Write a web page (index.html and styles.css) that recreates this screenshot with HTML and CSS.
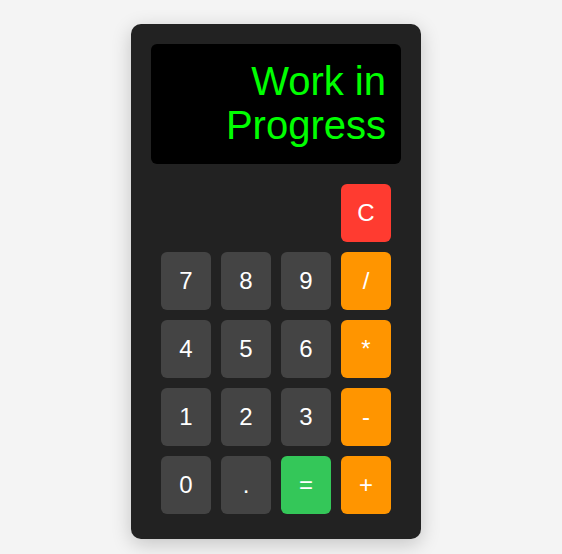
FILE: index.html
```html
<!DOCTYPE html>
<html lang="en">
<head>
<meta charset="utf-8">
<title>Calculator</title>
<link rel="stylesheet" href="styles.css">
</head>
<body>
<div class="calculator">
  <div class="display">Work in Progress</div>
  <div class="keys">
    <button class="key key-clear key-col4">C</button>
    <button class="key">7</button>
    <button class="key">8</button>
    <button class="key">9</button>
    <button class="key key-op">/</button>
    <button class="key">4</button>
    <button class="key">5</button>
    <button class="key">6</button>
    <button class="key key-op">*</button>
    <button class="key">1</button>
    <button class="key">2</button>
    <button class="key">3</button>
    <button class="key key-op">-</button>
    <button class="key">0</button>
    <button class="key">.</button>
    <button class="key key-equals">=</button>
    <button class="key key-op">+</button>
  </div>
</div>
</body>
</html>
```

FILE: styles.css
```css
html, body {
  margin: 0;
  height: 100%;
}
body {
  background: #f4f4f4;
  font-family: "Liberation Sans", Arial, sans-serif;
  display: flex;
  justify-content: center;
  align-items: flex-start;
  padding: 24px 10px 0 0;
  box-sizing: border-box;
}
.calculator {
  width: 290px;
  box-sizing: border-box;
  background: #222222;
  border-radius: 10px;
  padding: 20px 20px 25px;
  box-shadow: 0 5px 20px rgba(0, 0, 0, 0.2);
}
.display {
  height: 120px;
  box-sizing: border-box;
  background: #000000;
  color: #00ff00;
  border-radius: 6px;
  font-size: 40px;
  line-height: 44px;
  text-align: right;
  padding: 15px 15px;
}
.keys {
  margin-top: 20px;
  padding: 0 10px;
  display: grid;
  grid-template-columns: repeat(4, 50px);
  grid-auto-rows: 58px;
  gap: 10px;
}
.key {
  border: none;
  border-radius: 6px;
  background: #444444;
  color: #ffffff;
  font-family: "Liberation Sans", Arial, sans-serif;
  font-size: 24px;
  padding: 0;
  cursor: pointer;
}
.key-col4 {
  grid-column: 4;
}
.key-op {
  background: #ff9500;
}
.key-clear {
  background: #ff3b30;
}
.key-equals {
  background: #34c759;
}
```
